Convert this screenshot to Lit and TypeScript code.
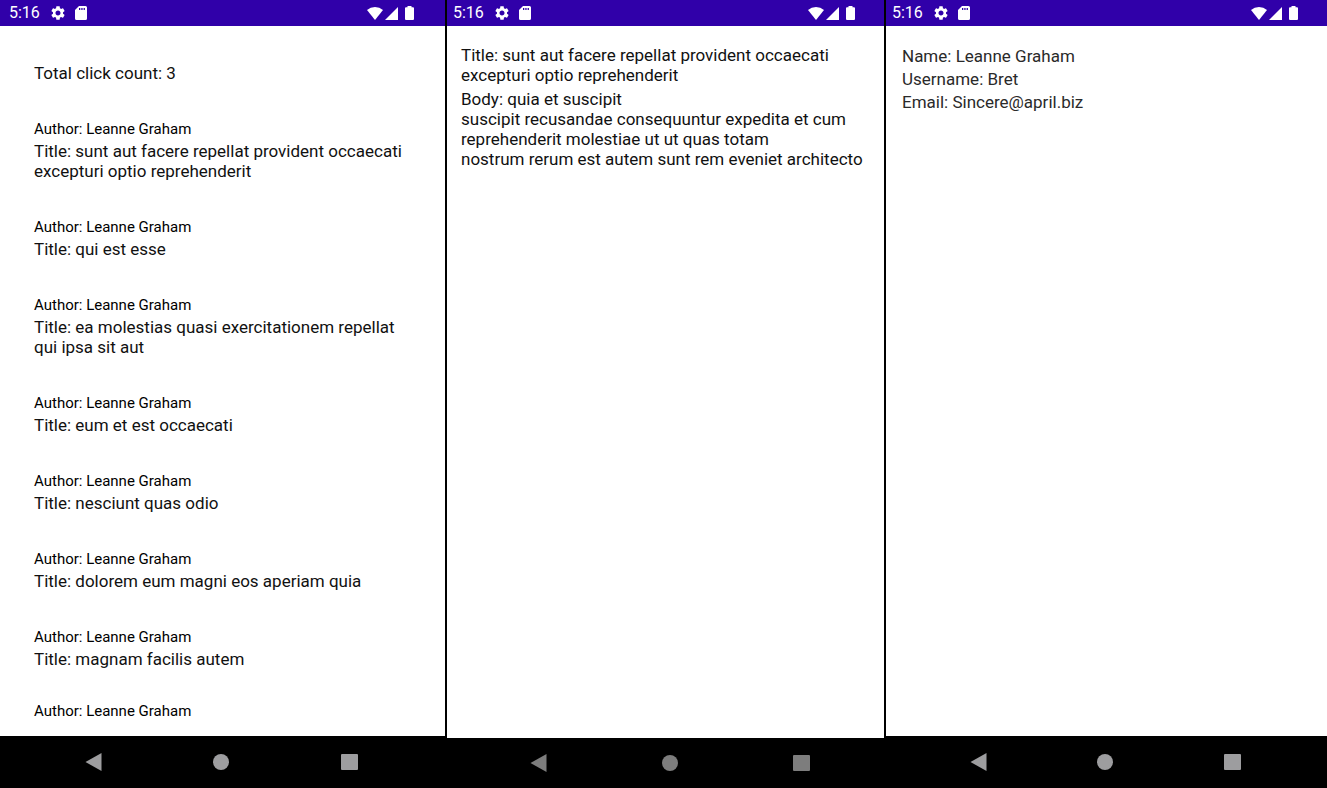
import { LitElement, html, css, svg } from "lit";
import { customElement, property } from "lit/decorators.js";

interface Post {
  author: string;
  title?: string;
}

const AUTHOR = "Leanne Graham";
const POSTS: Post[] = [
  { author: AUTHOR, title: "sunt aut facere repellat provident occaecati excepturi optio reprehenderit" },
  { author: AUTHOR, title: "qui est esse" },
  { author: AUTHOR, title: "ea molestias quasi exercitationem repellat qui ipsa sit aut" },
  { author: AUTHOR, title: "eum et est occaecati" },
  { author: AUTHOR, title: "nesciunt quas odio" },
  { author: AUTHOR, title: "dolorem eum magni eos aperiam quia" },
  { author: AUTHOR, title: "magnam facilis autem" },
  { author: AUTHOR },
];

const BODY = `quia et suscipit
suscipit recusandae consequuntur expedita et cum reprehenderit molestiae ut ut quas totam
nostrum rerum est autem sunt rem eveniet architecto`;

const gear = svg`<path fill-rule="evenodd" d="M19.14 12.94c.04-.3.06-.61.06-.94 0-.32-.02-.64-.07-.94l2.03-1.58c.18-.14.23-.41.12-.61l-1.92-3.32c-.12-.22-.37-.29-.59-.22l-2.39.96c-.5-.38-1.03-.7-1.62-.94l-.36-2.54c-.04-.24-.24-.41-.48-.41h-3.84c-.24 0-.43.17-.47.41l-.36 2.54c-.59.24-1.13.57-1.62.94l-2.39-.96c-.22-.08-.47 0-.59.22L2.74 8.87c-.12.21-.08.47.12.61l2.03 1.58c-.05.3-.09.63-.09.94s.02.64.07.94l-2.03 1.58c-.18.14-.23.41-.12.61l1.92 3.32c.12.22.37.29.59.22l2.39-.96c.5.38 1.03.7 1.62.94l.36 2.54c.05.24.24.41.48.41h3.84c.24 0 .44-.17.47-.41l.36-2.54c.59-.24 1.13-.56 1.62-.94l2.39.96c.22.08.47 0 .59-.22l1.92-3.32c.12-.22.07-.47-.12-.61l-2.01-1.58zM12 15.6c-1.98 0-3.6-1.62-3.6-3.6s1.62-3.6 3.6-3.6 3.6 1.62 3.6 3.6-1.62 3.6-3.6 3.6z"/>`;

@customElement("status-bar")
export class StatusBar extends LitElement {
  static styles = css`
    :host {
      display: flex;
      align-items: center;
      justify-content: space-between;
      box-sizing: border-box;
      height: 26px;
      padding: 0 31px 0 9px;
      background: #3000a9;
      color: #fff;
      font: 16px/20px Roboto, sans-serif;
    }
    :host([compact]) {
      padding: 0 29px 0 6px;
    }
    .group {
      display: flex;
      align-items: center;
    }
    .time {
      margin-right: 11px;
    }
    .gear {
      margin-right: 10px;
    }
    .wifi {
      margin-right: 2px;
    }
    .signal {
      margin-right: 7px;
    }
    svg {
      display: block;
      fill: #fff;
    }
  `;

  render() {
    return html`
      <div class="group">
        <span class="time">5:16</span>
        <svg class="gear" width="14" height="14" viewBox="2 2 20 20" aria-hidden="true">${gear}</svg>
        <svg width="12" height="14" viewBox="0 0 12 14" aria-hidden="true">
          <path fill-rule="evenodd" d="M4 0h6.5Q12 0 12 1.500V12.500Q12 14 10.500 14H1.500Q0 14 0 12.500V4zM4 2v2h1.300V2zM6.300 2v2h1.300V2zM8.600 2v2h1.300V2z"/>
        </svg>
      </div>
      <div class="group">
        <svg class="wifi" width="16" height="13" viewBox="0 0 16 13" aria-hidden="true">
          <path d="M0 3Q3.500 0 8 0t8 3L8 13z"/>
        </svg>
        <svg class="signal" width="13" height="13" viewBox="0 0 13 13" aria-hidden="true">
          <path d="M13 0v13H0z"/>
        </svg>
        <svg width="9" height="14" viewBox="0 0 9 14" aria-hidden="true">
          <path d="M2.500 0h4v1.300H8q1 0 1 1V13q0 1-1 1H1q-1 0-1-1V2.300q0-1 1-1h1.500z"/>
        </svg>
      </div>
    `;
  }
}

@customElement("nav-bar")
export class NavBar extends LitElement {
  static styles = css`
    :host {
      display: flex;
      align-items: center;
      justify-content: space-between;
      box-sizing: border-box;
      height: 52px;
      padding: 0 19.500% 0 19%;
      background: #000;
      color: #9d9d9f;
    }
    :host([dim]) {
      height: 50px;
      padding: 0 17% 0 19%;
      color: #7d7d7d;
    }
    button {
      display: block;
      padding: 0;
      border: 0;
      background: none;
      color: inherit;
    }
    svg {
      display: block;
      fill: currentColor;
    }
  `;

  render() {
    return html`
      <button aria-label="Back">
        <svg width="17" height="18" viewBox="0 0 17 18"><path d="M16.500 0v18L.5 9z"/></svg>
      </button>
      <button aria-label="Home">
        <svg width="16" height="18" viewBox="0 0 16 18"><circle cx="8" cy="9" r="8"/></svg>
      </button>
      <button aria-label="Recent apps">
        <svg width="17" height="18" viewBox="0 0 17 18"><rect y="1" width="17" height="16" rx="1"/></svg>
      </button>
    `;
  }
}

@customElement("phone-screen")
export class PhoneScreen extends LitElement {
  @property({ type: Boolean }) dim = false;
  @property({ type: Boolean }) compact = false;

  static styles = css`
    :host {
      display: flex;
      flex-direction: column;
      min-width: 0;
      min-height: 0;
      background: #fff;
    }
    .content {
      flex: 1;
      min-height: 0;
      overflow: hidden;
    }
  `;

  render() {
    return html`
      <status-bar ?compact=${this.compact}></status-bar>
      <div class="content"><slot></slot></div>
      <nav-bar ?dim=${this.dim}></nav-bar>
    `;
  }
}

@customElement("app-root")
export class AppRoot extends LitElement {
  static styles = css`
    :host {
      display: grid;
      grid-template-columns: 445fr 439fr 443fr;
      height: 100vh;
      overflow: hidden;
      background: #000;
      color: #111;
      font: 17px/20px Roboto, sans-serif;
    }
    .divided {
      border-left: 2px solid #000;
    }
    p {
      margin: 0;
    }
    .feed {
      padding: 37px 34px 0;
    }
    .posts {
      margin: 0;
      padding: 0;
      list-style: none;
    }
    .post {
      display: grid;
      gap: 2px;
      padding-top: 36px;
    }
    .post:last-child {
      padding-top: 32px;
    }
    .author {
      color: #000;
      font-size: 15px;
    }
    .detail {
      display: grid;
      gap: 4px;
      padding: 19px 14px;
    }
    .body {
      white-space: pre-line;
    }
    .profile {
      padding: 20px 16px;
      gap: 3px;
      color: #2a2a2a;
    }
  `;

  render() {
    return html`
      <phone-screen>
        <div class="feed">
          <p>Total click count: 3</p>
          <ul class="posts">
            ${POSTS.map(
              (post) => html`
                <li class="post">
                  <p class="author">Author: ${post.author}</p>
                  ${post.title ? html`<p>Title: ${post.title}</p>` : ""}
                </li>
              `
            )}
          </ul>
        </div>
      </phone-screen>
      <phone-screen class="divided" dim compact>
        <div class="detail">
          <p>Title: ${POSTS[0].title}</p>
          <p class="body">Body: ${BODY}</p>
        </div>
      </phone-screen>
      <phone-screen class="divided" compact>
        <div class="detail profile">
          <p>Name: Leanne Graham</p>
          <p>Username: Bret</p>
          <p>Email: Sincere@april.biz</p>
        </div>
      </phone-screen>
    `;
  }
}
